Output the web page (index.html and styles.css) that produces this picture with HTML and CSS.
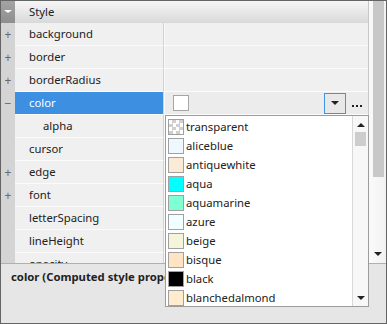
FILE: index.html
```html
<!DOCTYPE html>
<html lang="en">
<head>
    <meta charset="UTF-8">
    <title>Style properties</title>
    <link rel="stylesheet" href="styles.css">
</head>
<body>

<div class="frame">
    <div class="grid-area">
        <div class="grid">
            <div class="row header">
                <div class="gutter"><span class="tri-white"></span></div>
                <div class="head-name">Style</div>
            </div>

            <div class="row">
                <div class="gutter">+</div>
                <div class="name">background</div>
                <div class="value"></div>
            </div>
            <div class="row">
                <div class="gutter">+</div>
                <div class="name">border</div>
                <div class="value"></div>
            </div>
            <div class="row">
                <div class="gutter">+</div>
                <div class="name">borderRadius</div>
                <div class="value"></div>
            </div>
            <div class="row selected">
                <div class="gutter">&minus;</div>
                <div class="name">color</div>
                <div class="value editor">
                    <span class="swatch-box"></span>
                    <span class="combo-btn"><span class="tri-dark"></span></span>
                    <span class="more-btn"><i></i><i></i><i></i></span>
                </div>
            </div>
            <div class="row">
                <div class="gutter"></div>
                <div class="name child">alpha</div>
                <div class="value"></div>
            </div>
            <div class="row">
                <div class="gutter"></div>
                <div class="name">cursor</div>
                <div class="value"></div>
            </div>
            <div class="row">
                <div class="gutter">+</div>
                <div class="name">edge</div>
                <div class="value"></div>
            </div>
            <div class="row">
                <div class="gutter">+</div>
                <div class="name">font</div>
                <div class="value"></div>
            </div>
            <div class="row">
                <div class="gutter"></div>
                <div class="name">letterSpacing</div>
                <div class="value"></div>
            </div>
            <div class="row">
                <div class="gutter"></div>
                <div class="name">lineHeight</div>
                <div class="value"></div>
            </div>
            <div class="row">
                <div class="gutter"></div>
                <div class="name">opacity</div>
                <div class="value"></div>
            </div>
        </div>

        <div class="vscroll">
            <div class="thumb"></div>
            <span class="tri-dark"></span>
        </div>
    </div>

    <div class="desc">color (Computed style property)</div>

    <!-- kleurenlijst van de combobox -->
    <div class="dropdown">
        <div class="color-list">
            <div class="color-item"><span class="chip checker"></span>transparent</div>
            <div class="color-item"><span class="chip" style="background:#f0f8ff"></span>aliceblue</div>
            <div class="color-item"><span class="chip" style="background:#faebd7"></span>antiquewhite</div>
            <div class="color-item"><span class="chip" style="background:#00ffff"></span>aqua</div>
            <div class="color-item"><span class="chip" style="background:#7fffd4"></span>aquamarine</div>
            <div class="color-item"><span class="chip" style="background:#f0ffff"></span>azure</div>
            <div class="color-item"><span class="chip" style="background:#f5f5dc"></span>beige</div>
            <div class="color-item"><span class="chip" style="background:#ffe4c4"></span>bisque</div>
            <div class="color-item"><span class="chip" style="background:#000000"></span>black</div>
            <div class="color-item"><span class="chip" style="background:#ffebcd"></span>blanchedalmond</div>
        </div>
        <div class="list-scroll">
            <span class="tri-up"></span>
            <div class="list-thumb"></div>
            <span class="tri-dark"></span>
        </div>
    </div>
</div>

</body>
</html>
```

FILE: styles.css
```css
:root {
    --rowBg: #f0f0f0;
    --rowLine: #fbfbfb;
    --gutterBg: #d4d4d4;
    --selBlue: #3d8fe2;
    --text: #222;
    --fontSize: 11.3px;
}

* {
    box-sizing: border-box;
}

body {
    margin: 0;
    font-family: "Noto Sans", "Open Sans", sans-serif;
    font-size: var(--fontSize);
    color: var(--text);
    background: #fff;
}

.frame {
    position: relative;
    width: 387px;
    height: 324px;
    border: 1px solid #646464;
    display: flex;
    flex-direction: column;
    overflow: hidden;
}

/* Property grid */
.grid-area {
    display: flex;
    height: 262px;
}

.grid {
    flex: 1;
    overflow: hidden;
    background: var(--gutterBg);
}

.row {
    display: flex;
    height: 23px;
}

.gutter {
    width: 14px;
    flex-shrink: 0;
    background: var(--gutterBg);
    color: #6a6a6a;
    display: flex;
    align-items: center;
    justify-content: center;
    font-size: 12px;
    padding-bottom: 1px;
}

.header {
    height: 22px;
    background: linear-gradient(#f6f6f6, #d9d9d9);
}

.header .gutter {
    background: linear-gradient(#a4a4a4, #8e8e8e);
}

.head-name {
    padding: 0 0 2px 14px;
    display: flex;
    align-items: center;
}

.name {
    width: 149px;
    flex-shrink: 0;
    padding: 0 0 1px 14px;
    display: flex;
    align-items: center;
    background: var(--rowBg);
    border-bottom: 1px solid var(--rowLine);
    border-right: 1px solid #d2d2d2;
}

.name.child {
    padding-left: 28px;
}

.value {
    flex: 1;
    background: var(--rowBg);
    border-bottom: 1px solid var(--rowLine);
    border-left: 1px solid #fafafa;
}

.selected .name {
    background: var(--selBlue);
    color: #fff;
}

/* Editor in de kleurcel */
.editor {
    display: flex;
    align-items: center;
    padding-left: 8px;
    background: #ececec;
}

.swatch-box {
    width: 16px;
    height: 16px;
    background: #fff;
    border: 1px solid #a6a6a6;
}

.combo-btn {
    margin-left: auto;
    width: 22px;
    height: 21px;
    border: 1px solid #3e95e6;
    background: #e8e8e8;
    display: flex;
    align-items: center;
    justify-content: center;
}

.more-btn {
    width: 22px;
    height: 21px;
    display: flex;
    align-items: center;
    justify-content: center;
    gap: 2px;
    padding-top: 6px;
}

.more-btn i {
    width: 2px;
    height: 2px;
    background: #222;
}

.tri-dark {
    width: 0;
    height: 0;
    border-left: 4px solid transparent;
    border-right: 4px solid transparent;
    border-top: 4px solid #222;
}

.tri-white {
    width: 0;
    height: 0;
    border-left: 4px solid transparent;
    border-right: 4px solid transparent;
    border-top: 3px solid #fff;
}

.tri-up {
    width: 0;
    height: 0;
    border-left: 4px solid transparent;
    border-right: 4px solid transparent;
    border-bottom: 4px solid #222;
}

/* Scrollbar rechts */
.vscroll {
    width: 18px;
    flex-shrink: 0;
    border-left: 1px solid #c6c6c6;
    background: linear-gradient(90deg, #fafafa, #f2f2f2);
    display: flex;
    flex-direction: column;
    align-items: center;
    padding: 0 2px 7px 3px;
}

.thumb {
    width: 11px;
    height: 176px;
    background: #c8c8c8;
    margin-bottom: auto;
}

/* Beschrijving onderaan */
.desc {
    flex: 1;
    background: #e6e6e6;
    border-top: 1px solid #b0b0b0;
    padding: 5px 10px;
    font-weight: bold;
}

/* Dropdown met kleuren */
.dropdown {
    position: absolute;
    left: 164px;
    top: 114px;
    width: 204px;
    height: 192px;
    background: #fff;
    border: 1px solid #9c9c9c;
    display: flex;
    z-index: 5;
}

.color-list {
    flex: 1;
    padding-top: 1px;
}

.color-item {
    height: 19px;
    display: flex;
    align-items: center;
    gap: 2px;
    padding-left: 2px;
}

.color-item .chip {
    margin-top: 1px;
}

.color-item {
    padding-bottom: 1px;
}

.chip {
    width: 16px;
    height: 16px;
    border: 1px solid #a0a0a0;
}

.chip.checker {
    background: repeating-conic-gradient(#d0d0d0 0 25%, #fff 0 50%) 0 0 / 7px 7px;
}

.list-scroll {
    width: 16px;
    border-left: 1px solid #d8d8d8;
    background: #f7f7f7;
    display: flex;
    flex-direction: column;
    align-items: center;
    padding: 7px 0 6px;
}

.list-thumb {
    width: 11px;
    height: 14px;
    background: #cdcdcd;
    margin-top: 5px;
    margin-bottom: auto;
}
```
